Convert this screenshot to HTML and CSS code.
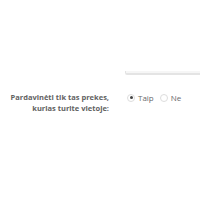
FILE: index.html
```html
<!DOCTYPE html>
<html>
<head>
<meta charset="utf-8">
<link rel="stylesheet" href="styles.css">
</head>
<body>
<div class="page">
  <div class="field-row">
    <div class="spacer"></div>
    <div class="input-box"></div>
  </div>
  <div class="form-row">
    <div class="label">Pardavinėti tik tas prekes,<br>kurias turite vietoje:</div>
    <div class="options">
      <label class="opt"><span class="radio checked"></span>Taip</label>
      <label class="opt"><span class="radio"></span>Ne</label>
    </div>
  </div>
</div>
</body>
</html>
```
FILE: styles.css
```css
html, body { margin: 0; padding: 0; background: #fff; }
body { width: 200px; height: 200px; overflow: hidden; font-family: "Open Sans", "Liberation Sans", sans-serif; }
.page { padding-top: 71px; }
.field-row { display: flex; }
.spacer { width: 125px; flex: none; }
.input-box { flex: 1; height: 2px; background: #f6f6f6; border-left: 1px solid #e2e2e2; border-bottom: 2px solid #e4e4e4; border-bottom-left-radius: 2px; }
.form-row { display: flex; margin-top: 17px; }
.label { width: 109px; flex: none; text-align: right; font-size: 7.5px; font-weight: 700; color: #626262; line-height: 11px; }
.options { display: flex; margin-left: 18px; gap: 6px; font-size: 8px; color: #6a6a6a; line-height: 11px; }
.opt { display: flex; align-items: center; height: 11px; }
.radio { width: 8px; height: 8px; border: 1px solid #ddd; border-radius: 50%; margin-right: 3px; box-sizing: border-box; position: relative; }
.radio.checked::after { content: ""; position: absolute; left: 1.5px; top: 1.5px; width: 3px; height: 3px; background: #444; border-radius: 50%; }
```
